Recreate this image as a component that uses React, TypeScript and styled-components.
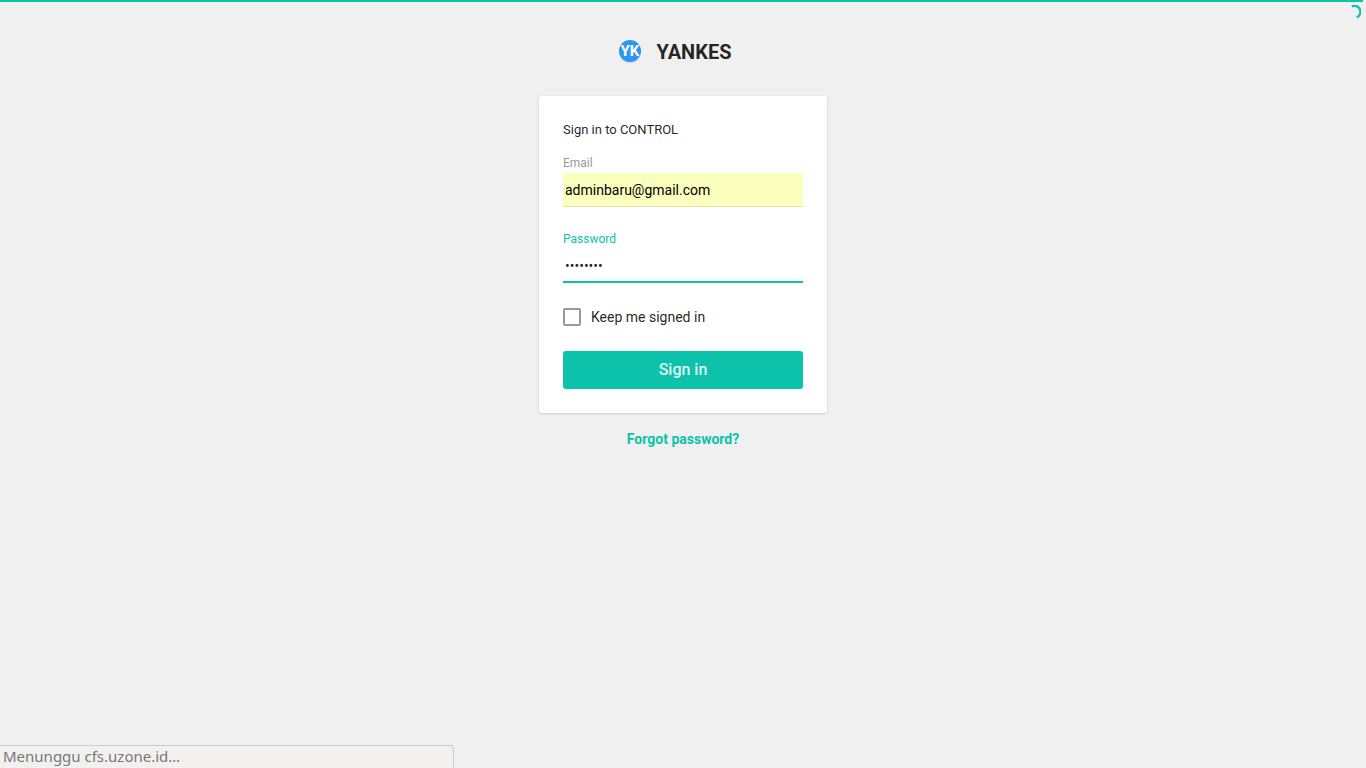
import React from "react";
import styled, { createGlobalStyle } from "styled-components";

const accent = "#0cc2aa";

const GlobalStyle = createGlobalStyle`
  *, *::before, *::after { box-sizing: border-box; }
  body {
    margin: 0;
    background: #f0f0f0;
    color: rgba(0, 0, 0, 0.87);
    font: 14px/20px Roboto, "Liberation Sans", sans-serif;
  }
`;

const Page = styled.div`
  position: relative;
  min-height: 100vh;
  padding: 40px 16px;
`;

const ProgressBar = styled.div`
  position: absolute;
  top: 0;
  left: 0;
  right: 3px;
  height: 2px;
  background: ${accent};
`;

const Spinner = styled.svg`
  position: absolute;
  top: 5px;
  right: 5px;
  width: 14px;
  height: 14px;
`;

const Brand = styled.header`
  display: flex;
  align-items: center;
  justify-content: center;
  gap: 16px;
  height: 24px;
  padding-right: 16px;
  margin-bottom: 32px;
`;

const Logo = styled.svg`
  width: 22px;
  height: 24px;
`;

const BrandName = styled.h1`
  margin: 0;
  font-size: 20px;
  line-height: 24px;
  font-weight: 700;
`;

const Panel = styled.main`
  width: 100%;
  max-width: 288px;
  margin: 0 auto;
`;

const Card = styled.form`
  padding: 24px;
  background: #fff;
  border-radius: 3px;
  box-shadow: 0 1px 3px rgba(0, 0, 0, 0.15);
`;

const Title = styled.p`
  margin: 0 0 14px;
  font-size: 13px;
  line-height: 20px;
`;

const Field = styled.div`
  & + & { margin-top: 23px; }
`;

const Label = styled.label<{ $active?: boolean }>`
  display: block;
  font-size: 12px;
  line-height: 19px;
  color: ${(p) => (p.$active ? accent : "#999")};
`;

const Input = styled.input<{ $active?: boolean; $filled?: boolean }>`
  display: block;
  width: 100%;
  height: 34px;
  padding: ${(p) => (p.$active ? "2px 2px 0" : "0 2px")};
  border: 0;
  border-bottom: ${(p) => (p.$active ? `2px solid ${accent}` : "1px solid #e1e5ad")};
  border-radius: 0;
  outline: 0;
  background: ${(p) => (p.$filled ? "#faffbd" : "transparent")};
  color: ${(p) => (p.$filled ? "#000" : "inherit")};
  font: inherit;
`;

const CheckRow = styled.label`
  display: flex;
  align-items: center;
  gap: 10px;
  margin: 24px 0;
`;

const Checkbox = styled.input`
  appearance: none;
  width: 18px;
  height: 18px;
  margin: 0;
  border: 2px solid #999;
  border-radius: 2px;
  &:checked { background: ${accent}; border-color: ${accent}; }
`;

const SubmitButton = styled.button`
  display: block;
  width: 100%;
  height: 38px;
  padding: 0 0 2px;
  border: 0;
  border-radius: 3px;
  background: ${accent};
  color: rgba(255, 255, 255, 0.87);
  font-family: inherit;
  font-size: 16px;
  font-weight: 500;
`;

const Footer = styled.p`
  margin: 16px 0 0;
  text-align: center;
`;

const ForgotLink = styled.a`
  color: ${accent};
  font-weight: 700;
  text-decoration: none;
`;

const StatusBubble = styled.div`
  position: absolute;
  left: 0;
  bottom: 0;
  width: 454px;
  max-width: 100%;
  height: 23px;
  padding-left: 3px;
  border: solid #ccc;
  border-width: 1px 1px 0 0;
  border-top-right-radius: 4px;
  background: #f2f1f0;
  color: #777;
  font: 15px/20px "Noto Sans", sans-serif;
  white-space: nowrap;
`;

export default function App() {
  return (
    <>
      <GlobalStyle />
      <Page>
        <ProgressBar />
        <Spinner viewBox="0 0 14 14" aria-hidden="true">
          <path d="M5 1.3A5.8 5.8 0 0 1 9.8 12.4" fill="none" stroke={accent} strokeWidth="2.4" />
        </Spinner>
        <Brand>
          <Logo viewBox="0 0 22 24" aria-hidden="true">
            <circle cx="11" cy="12" r="11" fill="#d4d4d4" />
            <circle cx="11" cy="11" r="11" fill="#2b97f0" />
            <text
              x="11"
              y="16"
              textAnchor="middle"
              fill="#fff"
              fontFamily="Roboto, sans-serif"
              fontSize="15"
              fontWeight="700"
            >
              YK
            </text>
          </Logo>
          <BrandName>YANKES</BrandName>
        </Brand>
        <Panel>
          <Card onSubmit={(e) => e.preventDefault()}>
            <Title>Sign in to CONTROL</Title>
            <Field>
              <Label htmlFor="email">Email</Label>
              <Input id="email" type="email" defaultValue="adminbaru@gmail.com" $filled />
            </Field>
            <Field>
              <Label htmlFor="password" $active>Password</Label>
              <Input id="password" type="password" defaultValue="password" $active />
            </Field>
            <CheckRow>
              <Checkbox type="checkbox" />
              Keep me signed in
            </CheckRow>
            <SubmitButton type="submit">Sign in</SubmitButton>
          </Card>
          <Footer>
            <ForgotLink href="#forgot">Forgot password?</ForgotLink>
          </Footer>
        </Panel>
        <StatusBubble role="status">Menunggu cfs.uzone.id…</StatusBubble>
      </Page>
    </>
  );
}
